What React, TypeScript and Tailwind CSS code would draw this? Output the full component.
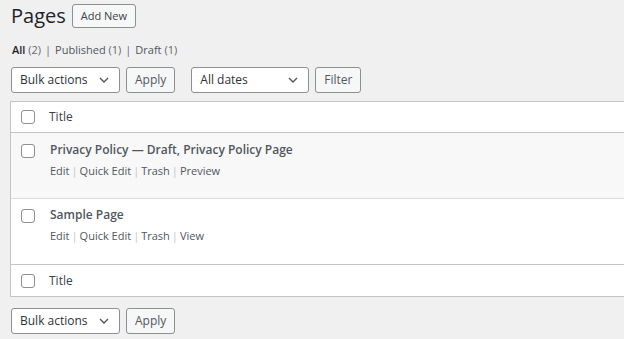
import React from 'react';

const Checkbox: React.FC = () => (
  <span className="block w-[14px] h-[14px] rounded-[3px] border border-[#8c8f94] bg-white" />
);

const Chevron: React.FC = () => (
  <svg width="10" height="6" viewBox="0 0 10 6" fill="none" stroke="#50575e" strokeWidth="1.4">
    <path d="M1 1l4 4 4-4" />
  </svg>
);

const Select: React.FC<{ label: string; width: string }> = ({ label, width }) => (
  <div className={`${width} h-[26px] flex items-center justify-between pl-[8px] pr-[10px] bg-white border border-[#8c8f94] rounded-[3px] text-[12px] text-[#2c3338]`}>
    <span>{label}</span>
    <Chevron />
  </div>
);

const Button: React.FC<{ label: string }> = ({ label }) => (
  <button className="h-[26px] px-[8px] bg-[#f6f7f7] border border-[#8c8f94] rounded-[3px] text-[12px] text-[#50575e]">
    {label}
  </button>
);

const RowActions: React.FC<{ last: string }> = ({ last }) => (
  <div className="flex items-center text-[11px] text-[#50575e] mt-[4px]">
    {['Edit', 'Quick Edit', 'Trash', last].map((a, i) => (
      <React.Fragment key={a}>
        {i > 0 && <span className="text-[#c3c4c7] px-[2px]">|</span>}
        <span>{a}</span>
      </React.Fragment>
    ))}
  </div>
);

export default function App() {
  return (
    <div className="w-[624px] h-[339px] overflow-hidden bg-[#f0f0f1] text-[#3c434a]" style={{ fontFamily: '"Open Sans", "Noto Sans", sans-serif' }}>
      <div className="flex items-center gap-[6px] pl-[11px] pt-[4px]">
        <h1 className="text-[20px] leading-[24px] text-[#1d2327]">Pages</h1>
        <button className="h-[24px] px-[8px] bg-[#f6f7f7] border border-[#8c8f94] rounded-[3px] text-[11px] text-[#3c434a]">
          Add New
        </button>
      </div>

      <div className="pl-[12px] mt-[14px] text-[11px] leading-[16px] text-[#50575e]">
        <span className="font-semibold text-[#1d2327]">All</span> <span className="text-[#646970]">(2)</span>
        <span className="px-[4px] text-[#646970]">|</span>
        Published <span className="text-[#646970]">(1)</span>
        <span className="px-[4px] text-[#646970]">|</span>
        Draft <span className="text-[#646970]">(1)</span>
      </div>

      <div className="flex items-center pl-[11px] mt-[8px]">
        <Select label="Bulk actions" width="w-[109px]" />
        <div className="ml-[6px]"><Button label="Apply" /></div>
        <div className="ml-[16px]"><Select label="All dates" width="w-[118px]" /></div>
        <div className="ml-[6px]"><Button label="Filter" /></div>
      </div>

      <div className="ml-[10px] mt-[8px] w-[640px] bg-white border border-[#c3c4c7]">
        <div className="h-[31px] flex items-center border-b border-[#c3c4c7]">
          <div className="w-[38px] pl-[10px]"><Checkbox /></div>
          <span className="text-[12px]">Title</span>
        </div>
        <div className="h-[66px] flex bg-[#f8f8f8] border-b border-[#dcdcde] pt-[8px]">
          <div className="w-[39px] pl-[10px] pt-[3px]"><Checkbox /></div>
          <div>
            <div className="text-[12px] font-semibold text-[#50575e]">Privacy Policy — Draft, Privacy Policy Page</div>
            <RowActions last="Preview" />
          </div>
        </div>
        <div className="h-[66px] flex border-b border-[#c3c4c7] pt-[7px]">
          <div className="w-[39px] pl-[10px] pt-[3px]"><Checkbox /></div>
          <div>
            <div className="text-[12px] font-semibold text-[#50575e]">Sample Page</div>
            <RowActions last="View" />
          </div>
        </div>
        <div className="h-[31px] flex items-center">
          <div className="w-[38px] pl-[10px]"><Checkbox /></div>
          <span className="text-[12px]">Title</span>
        </div>
      </div>

      <div className="flex items-center pl-[11px] mt-[10px]">
        <Select label="Bulk actions" width="w-[109px]" />
        <div className="ml-[6px]"><Button label="Apply" /></div>
      </div>
    </div>
  );
}
